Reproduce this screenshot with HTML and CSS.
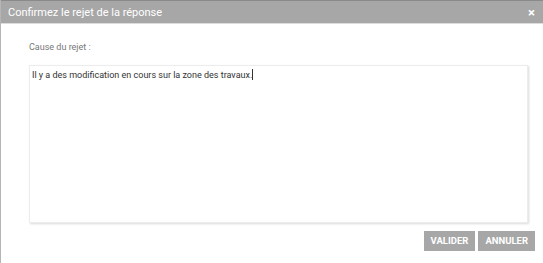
FILE: index.html
```html
<!DOCTYPE html>
<html lang="fr">
<head>
    <meta charset="UTF-8">
    <title>Confirmez le rejet de la réponse</title>
    <link rel="stylesheet" href="styles.css">
</head>
<body>
    <div class="dialog">
        <div class="dialog-header">
            <span class="dialog-title">Confirmez le rejet de la réponse</span>
            <span class="dialog-close">&times;</span>
        </div>
        <div class="dialog-body">
            <label for="cause" class="field-label">Cause du rejet :</label>
            <div class="textarea" id="cause">Il y a des modification en cours sur la zone des travaux.<span class="caret"></span></div>
            <div class="actions">
                <a href="#" class="btn">VALIDER</a>
                <a href="#" class="btn">ANNULER</a>
            </div>
        </div>
    </div>
</body>
</html>
```

FILE: styles.css
```css
body {
    margin: 0;
    font-family: Roboto, "Liberation Sans", Arial, sans-serif;
    background: #fff;
}

.dialog {
    width: 543px;
    height: 263px;
    border-left: 1px solid #b5b5b5;
    box-sizing: border-box;
}

.dialog-header {
    display: flex;
    justify-content: space-between;
    align-items: center;
    height: 22px;
    padding: 0 8px 0 7px;
    background-color: #a7a7a7;
    border-top: 1px solid #8a8a8a;
    border-bottom: 1px solid #dcdcdc;
}

.dialog-title {
    color: #fff;
    font-size: 11px;
}

.dialog-close {
    color: #fff;
    font-size: 13px;
    font-weight: bold;
}

.dialog-body {
    padding: 18px 15px 0 28px;
}

.field-label {
    display: block;
    color: #777;
    font-size: 9px;
    margin-bottom: 13px;
}

.textarea {
    height: 150px;
    padding: 3px 2px;
    font-size: 9px;
    color: #333;
    border: 1px solid #ececec;
    box-shadow: 1px 1px 2px rgba(0, 0, 0, 0.15);
}

.caret {
    display: inline-block;
    width: 1px;
    height: 11px;
    background: #333;
    vertical-align: -2px;
}

.actions {
    display: flex;
    justify-content: flex-end;
    gap: 3px;
    margin-top: 8px;
    margin-right: -7px;
}

.btn {
    display: block;
    height: 20px;
    line-height: 20px;
    padding: 0 7px;
    text-align: center;
    background-color: #a7a7a7;
    color: #fff;
    font-size: 9.5px;
    font-weight: bold;
    text-decoration: none;
}
```
